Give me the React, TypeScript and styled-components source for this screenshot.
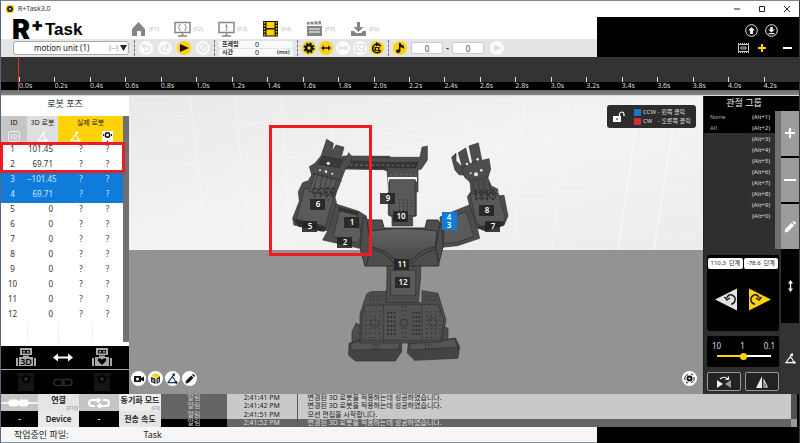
import React from "react";
import styled, { createGlobalStyle, css } from "styled-components";

const GOLD = "#ffd20a";
const BLUE = "#0f7bdb";

const GlobalStyle = createGlobalStyle`
  * { box-sizing: border-box; }
  body {
    margin: 0;
    background: #000;
    color: #222;
    font-family: "Noto Sans", "Noto Sans CJK KR", sans-serif;
    font-size: 8px;
    line-height: 10px;
  }
  button, input, select { font: inherit; color: inherit; margin: 0; padding: 0; border: 0; background: none; }
  button { display: flex; align-items: center; justify-content: center; cursor: pointer; }
  svg { display: block; flex: none; }
`;

const Window = styled.div`
  min-height: 100vh;
  display: flex;
  flex-direction: column;
  border: 1px solid #59677a;
  border-top-color: #7e8998;
  border-right-color: #2b3947;
  border-bottom: 0;
`;

const TitleBar = styled.header`
  height: 16px;
  display: flex;
  align-items: center;
  gap: 4px;
  padding: 0 7px 0 5px;
  background: #fff;
  h1 { flex: 1; margin: 0; font-size: 7px; line-height: 10px; font-weight: 400; color: #333; }
`;
const WindowButtons = styled.div`
  display: flex;
  gap: 15px;
`;

const Header = styled.div`
  display: flex;
`;
const HeaderMain = styled.div`
  flex: 1;
  min-width: 0;
  background: #fff;
`;
const HeaderSide = styled.div`
  width: 202px;
  display: flex;
  flex-direction: column;
  align-items: flex-end;
  gap: 6px;
  padding: 7px 6px 0 0;
  background: #000;
`;
const SideRow = styled.div<{ $gap: number; $end?: number }>`
  display: flex;
  align-items: center;
  gap: ${(p) => p.$gap}px;
  padding-right: ${(p) => p.$end ?? 0}px;
`;

const TabRow = styled.div`
  height: 22px;
  display: flex;
`;
const Logo = styled.div`
  width: 118px;
  height: 22px;
  padding: 2px 0 0 11px;
  margin-right: 11px;
  display: flex;
  align-items: flex-start;
  color: #000;
  font-family: "Liberation Sans", sans-serif;
  font-weight: 700;
  white-space: nowrap;
`;
const LogoR = styled.span`
  width: 19px;
  font-family: Inter, "Liberation Sans", sans-serif;
  font-weight: 900;
  font-size: 27px;
  line-height: 21px;
`;
const LogoPlus = styled.span`
  width: 14px;
  font-family: Inter, "Liberation Sans", sans-serif;
  font-weight: 900;
  font-size: 18px;
  line-height: 11px;
`;
const LogoTask = styled.span`
  font-size: 17px;
  line-height: 22px;
`;
const Tabs = styled.nav`
  display: grid;
  grid-template-columns: repeat(6, 44px);
  align-items: center;
  padding-top: 2px;
`;
const Tab = styled.button`
  justify-content: flex-start;
  gap: 2px;
  font-size: 6px;
  color: #bbb;
`;

const Toolbar = styled.div`
  height: 18px;
  display: flex;
  align-items: center;
  padding-left: 12px;
  background: #e4e4e4;
`;
const Divider = styled.i`
  width: 1px;
  height: 16px;
  margin: 0 4px;
  border-left: 1px dashed #777;
`;
const UnitPicker = styled.label`
  width: 116px;
  height: 14px;
  margin-right: 1px;
  display: flex;
  align-items: center;
  border: 1px solid #aaa;
  border-radius: 3px;
  background: #fff;
  color: #222;
  padding-right: 1px;
  select { flex: 1; min-width: 0; appearance: none; text-align: center; text-align-last: center; outline: 0; }
  small { font-size: 7px; color: #888; margin-right: 2px; }
`;
const Circles = styled.div<{ $gap: number }>`
  display: flex;
  gap: ${(p) => p.$gap}px;
`;
const Circle = styled.button<{ $on?: boolean }>`
  width: 14px;
  height: 14px;
  border-radius: 50%;
  background: ${(p) => (p.$on ? GOLD : "#fafafa")};
  color: ${(p) => (p.$on ? "#111" : "#dedede")};
`;
const Timing = styled.div`
  width: 74px;
  display: grid;
  gap: 1px;
`;
const TimingRow = styled.label`
  height: 7px;
  display: grid;
  grid-template-columns: 33px 1fr 16px;
  align-items: center;
  padding-left: 3px;
  border-radius: 2px;
  background: #fafafa;
  font-size: 6px;
  line-height: 7px;
  color: #222;
  input { width: 100%; height: 7px; font-size: 7px; }
  span { white-space: nowrap; font-weight: 600; }
`;
const Bounds = styled.div`
  display: flex;
  align-items: center;
  margin: 0 6px 0 4px;
`;
const NumberBox = styled.input`
  && {
    width: 32px;
    height: 12px;
    text-align: center;
    border: 1px solid #ccc;
    border-radius: 2px;
    background: #fff;
    color: #345;
  }
`;
const Dash = styled.span`
  width: 9px;
  text-align: center;
  font-weight: 700;
`;

const Timeline = styled.div`
  height: 39px;
  padding-left: 17px;
  background: linear-gradient(#333 25px, #000 25px 33px, #6c6c6c 33px, #858585 38px, #ddd 38px);
`;
const Ticks = styled.ol`
  list-style: none;
  height: 33px;
  margin: 0;
  padding: 0;
  display: grid;
  grid-template-columns: repeat(22, 1fr);
  border-left: 1px solid #d8361a;
`;
const Tick = styled.li`
  padding-top: 20px;
  font-size: 7px;
  line-height: 8px;
  color: #ddd;
  &::before { content: ""; display: block; width: 1px; height: 5px; background: #ddd; }
`;

const Main = styled.main`
  flex: 1;
  display: flex;
  min-height: 0;
`;

const PosePanel = styled.section`
  width: 128px;
  display: flex;
  flex-direction: column;
  background: #fff;
  h2 { margin: 0; height: 20px; font-size: 9px; line-height: 15px; font-weight: 400; text-align: center; color: #234; }
`;
const PoseBody = styled.div`
  position: relative;
  flex: 1;
  display: flex;
  align-items: stretch;
  margin-bottom: 4px;
`;
const ScrollStrip = styled.div`
  width: 6px;
  background: #707070;
`;
const PoseTable = styled.table`
  flex: 1;
  border-collapse: collapse;
  table-layout: fixed;
  width: 122px;
  td, th { padding: 0; font-weight: 400; }
`;
const HeadCell = styled.th<{ $tone: string }>`
  height: ${(p) => (p.scope === "col" ? 13 : 14)}px;
  background: ${(p) => p.$tone};
  font-size: 7px;
  line-height: 10px;
  color: #222;
  white-space: nowrap;
  svg { margin: 0 auto; }
`;
const PoseRow = styled.tr<{ $on: boolean }>`
  height: 15px;
  background: ${(p) => (p.$on ? BLUE : "#fff")};
  color: ${(p) => (p.$on ? "#d5eaff" : "#333")};
  line-height: 12px;
  td { text-align: center; vertical-align: top; }
  td:first-child { padding-right: 3px; }
  td:nth-child(2) { text-align: right; padding-right: 5px; }
  td:nth-child(3) { padding-left: 12px; }
`;
const FillRow = styled.tr`
  td { border-right: 1px solid #eee; }
  td:last-child { border: 0; }
`;
const Highlight = styled.div`
  position: absolute;
  left: -1px;
  right: 4px;
  top: 26px;
  height: 31px;
  border: 3px solid #ed1c24;
  pointer-events: none;
`;
const RobotBar = styled.div<{ $dim?: boolean }>`
  height: 23px;
  display: grid;
  grid-template-columns: 50px 1fr 54px;
  place-items: center;
  background: #000;
  color: ${(p) => (p.$dim ? "#2a2a2a" : "#a9a9a9")};
  ${(p) => p.$dim && css`border-top: 1px solid #aaa; height: 25px;`}
`;

const Viewport = styled.section`
  position: relative;
  flex: 1;
  min-width: 0;
  overflow: hidden;
  background: linear-gradient(#ededed 154px, #939393 154px);
`;
const Scene = styled.svg`
  width: 100%;
  height: 298px;
  text { font: 600 8px "Noto Sans", sans-serif; fill: #fff; text-anchor: middle; }
`;
const Legend = styled.div`
  position: absolute;
  top: 9px;
  right: 7px;
  width: 89px;
  height: 23px;
  display: flex;
  align-items: center;
  gap: 9px;
  padding-left: 6px;
  border-radius: 3px;
  background: #2d2d2d;
  color: #ddd;
  font-size: 6px;
  line-height: 9px;
`;
const LegendLine = styled.div<{ $c: string }>`
  display: grid;
  grid-template-columns: 8px 14px auto;
  gap: 1px;
  align-items: center;
  white-space: nowrap;
  &::before { content: ""; width: 7px; height: 7px; background: ${(p) => p.$c}; }
`;
const ViewTools = styled.div<{ $right?: boolean }>`
  position: absolute;
  bottom: 8px;
  ${(p) => (p.$right ? "right: 6px;" : "left: 2px;")}
  display: flex;
  gap: 2px;
`;
const ViewButton = styled.button`
  width: 15px;
  height: 15px;
  border-radius: 50%;
  background: #fff;
  color: #111;
`;

const SidePanel = styled.aside`
  width: 96px;
  display: flex;
  flex-direction: column;
  background: #000;
  border-left: 1px solid #222;
  h2 { margin: 0; height: 15px; padding-right: 15px; font-size: 9px; line-height: 14px; font-weight: 400; text-align: center; color: #eee; }
`;
const GroupArea = styled.div`
  height: 138px;
  display: grid;
  grid-template-columns: 1fr 6px 18px;
  background: #2f2f2f;
`;
const GroupList = styled.ul`
  list-style: none;
  margin: 0;
  padding: 0;
`;
const GroupItem = styled.button<{ $set: boolean }>`
  && { padding: 0 5px 0 6px; }
  width: 100%;
  height: 11px;
  justify-content: space-between;
  background: ${(p) => (p.$set ? "#000" : "transparent")};
  font-size: 6px;
  line-height: 10px;
  color: #aaa;
  span:last-child { color: #ddd; }
`;
const GroupActions = styled.div`
  display: grid;
  grid-template-rows: repeat(3, 1fr);
  gap: 2px;
  background: #000;
`;
const GroupAction = styled.button`
  && { background: #9c9c9c; color: #fff; }
`;
const Controls = styled.div`
  flex: 1;
  display: grid;
  grid-template-columns: 1fr 18px;
  background: #2f2f2f;
`;
const ControlStack = styled.div`
  display: flex;
  flex-direction: column;
  gap: 5px;
  padding: 6px 2px 3px 3px;
`;
const Card = styled.div`
  flex: 1;
  border-radius: 2px;
  background: #000;
  padding: 3px 1px;
`;
const Values = styled.div`
  display: grid;
  grid-template-columns: 1fr 1fr;
  gap: 1px;
`;
const Value = styled.output`
  height: 11px;
  border-radius: 2px;
  background: #fff;
  color: #222;
  font-size: 6px;
  line-height: 11px;
  text-align: center;
  white-space: nowrap;
`;
const Turns = styled.div`
  display: flex;
  justify-content: center;
  gap: 12px;
  padding-top: 19px;
`;
const SliderCard = styled.label`
  height: 31px;
  display: block;
  border-radius: 2px;
  background: #000;
  padding: 5px 4px 0 5px;
  color: #ddd;
`;
const Scale = styled.span`
  display: flex;
  justify-content: space-between;
`;
const Slider = styled.input`
  && {
    display: block;
    width: 54px;
    height: 8px;
    margin: 1px auto 0;
    appearance: none;
    background: linear-gradient(90deg, ${GOLD} 50%, #fff 50%) center / 100% 2px no-repeat;
  }
  &::-webkit-slider-thumb { appearance: none; width: 7px; height: 7px; border-radius: 50%; background: ${GOLD}; }
`;
const Mirrors = styled.div`
  display: grid;
  grid-template-columns: 1fr 1fr;
  gap: 4px;
`;
const MirrorButton = styled.button`
  && { border: 1px solid #999; background: #222; }
  height: 19px;
  border-radius: 2px;
`;
const ModeTabs = styled.div`
  display: grid;
  grid-template-rows: 74px 1fr;
`;
const ModeTab = styled.button<{ $dark?: boolean }>`
  && { background: ${(p) => (p.$dark ? "#000" : "#333")}; color: #fff; }
`;

const Footer = styled.footer`
  display: grid;
  grid-template-columns: 160px 1fr 6px 2px;
  height: 33px;
  background: #000;
`;
const Connection = styled.div`
  display: grid;
  grid-template-columns: 37px 41px 40px 42px;
  grid-template-rows: 17px 16px;
`;
const ConnCell = styled.button<{ $bg: string; $fg?: string; $key?: boolean }>`
  && {
    background: ${(p) => p.$bg};
    color: ${(p) => p.$fg ?? "#222"};
    font-weight: 600;
    ${(p) => p.$key && css`flex-direction: column; justify-content: flex-end;`}
  }
  white-space: nowrap;
  overflow: hidden;
  small { align-self: flex-end; padding-right: 1px; font-size: 5px; line-height: 6px; font-weight: 400; color: #888; }
`;
const Log = styled.table`
  width: 100%;
  height: 33px;
  border-collapse: collapse;
  table-layout: fixed;
  font-size: 7px;
  line-height: 8px;
  td { padding: 0; height: 8px; text-align: center; white-space: nowrap; }
  td:last-child { text-align: left; padding-left: 10px; }
`;
const LogRow = styled.tr<{ $on: boolean }>`
  background: ${(p) => (p.$on ? "#656565" : "#c9c9c9")};
  color: ${(p) => (p.$on ? "#ddd" : "#222")};
  td:first-child { background: ${(p) => (p.$on ? "#000" : "#646464")}; color: #ccc; }
  td:nth-child(2) { border-right: 1px solid #555; }
`;
const LogScroll = styled.div`
  background: linear-gradient(#505050 25px, #999 25px);
`;
const Status = styled.div`
  height: 16px;
  margin-right: 202px;
  display: flex;
  gap: 75px;
  padding-left: 13px;
  background: #f5f6f5;
  border-bottom: 1px solid #8a929c;
  font-size: 9px;
  line-height: 15px;
`;

type IconProps = { w: number; h: number; box: string; children: React.ReactNode };
const Icon = ({ w, h, box, children }: IconProps) => (
  <svg width={w} height={h} viewBox={box} fill="currentColor" aria-hidden="true">{children}</svg>
);
const line = (width: number) => ({ fill: "none", stroke: "currentColor", strokeWidth: width });

const tabs = [
  { key: "F1", icon: <Icon w={17} h={16} box="0 0 17 16"><path fill="#858585" d="M8.500 1 15 8v7H11v-5H7v5H2V8z" /></Icon> },
  { key: "F2", icon: <Icon w={17} h={16} box="0 0 17 16"><g stroke="#858585" fill="none" strokeWidth="1.500"><path d="M1 1.500h15v10H1zM8.500 12v3M4 15h9" /><path d="M6.500 3.500q-1.500 0-1.200 1.500 0 1-1 1.500 1 .5 1 1.500-.3 1.500 1.200 1.500M10.500 3.500q1.500 0 1.200 1.500 0 1 1 1.500-1 .5-1 1.500.3 1.500-1.200 1.500" strokeWidth="1" /></g></Icon> },
  { key: "F3", icon: <Icon w={17} h={16} box="0 0 17 16"><path stroke="#858585" fill="none" strokeWidth="1.500" d="M1 1.500h15v10H1zM8.500 12v3M4 15h9M8.500 3.500v4M8.500 8.500v1.500" /></Icon> },
  { key: "F4", icon: <Icon w={17} h={16} box="0 0 17 16"><path fill="#111" d="M1 0h15v15.500H1z" /><path fill={GOLD} d="M4.500 1h8v6h-8zM4.500 8.500h8v6h-8z" /><path stroke={GOLD} strokeWidth="1.500" strokeDasharray="1.500 1.500" d="M2.500 1v14M14.500 1v14" /></Icon> },
  { key: "F5", icon: <Icon w={17} h={16} box="0 0 17 16"><path fill="#858585" d="M1 5h15v10H1zM1 1l14-1v3.500H1z" /><path stroke="#fff" strokeWidth="1" d="m3 0 2 4M7 0l2 4M11 0l2 4M3 8h11M3 11h11" /></Icon> },
  { key: "F6", icon: <Icon w={17} h={16} box="0 0 17 16"><path fill="#858585" d="M7 1h3v5h3.500l-5 5-5-5H7zM1 10h3l2 2h5l2-2h3v5H1z" /></Icon> },
];

const FilmIcon = () => (
  <Icon w={11} h={10} box="0 0 11 10"><g {...line(1)} stroke="#ccc"><path d="M.5 1.500h10v7H.5zM3 4h5v2H3z" /><path strokeDasharray="1 1" d="M0 .5h11M0 9.500h11" /></g></Icon>
);
const Pencil = ({ size }: { size: number }) => (
  <Icon w={size} h={size} box="0 0 12 12"><path d="M.5 11.500 1.300 8 7.500 1.800l2.700 2.700L4 10.700zM8.300 1l1-.8q.5-.3 1 0l1.500 1.500q.3.500 0 1l-.8 1z" /></Icon>
);
const Angle = ({ size, color = "currentColor" }: { size: number; color?: string }) => (
  <Icon w={size} h={size} box="0 0 12 12"><g fill="none" stroke={color} strokeWidth="1.200"><path d="M8 1 1 10.500h10M6 4.500q3 2 3 6M9.500 9l1.800 1.500-1.800 1.300M5.800 2 8 1v2.500" /></g></Icon>
);
const Undo = ({ flip }: { flip?: boolean }) => (
  <Icon w={10} h={10} box="0 0 10 10"><g transform={flip ? "matrix(-1 0 0 1 10 0)" : undefined} {...line(1.300)}><path d="M4 1 1.500 3.300 4 5.500M1.500 3.300H6q2.500.2 2.500 2.500T6 8.300H3" /></g></Icon>
);
const Arrows = () => (
  <Icon w={10} h={6} box="0 0 10 6"><path d="M0 3 3 .5v1.700h4V.5L10 3 7 5.500V3.800H3v1.700z" /></Icon>
);

const RobotIcon = ({ kind }: { kind: "3d" | "heart" }) => (
  <Icon w={22} h={19} box="0 0 22 19">
    <path d="M5 0h12v7H5zM8 7.500h6V9H8zM4 9h14v9H4zM1 10h2v8H1zM19 10h2v8h-2z" />
    <path fill="#111" d="M7 2h8v3.500H7z" />
    <circle cx="9" cy="3.700" r="1" /><circle cx="13" cy="3.700" r="1" />
    {kind === "heart"
      ? <path fill="#000" d="m11 17-4-4q-1-2.500 1.500-2.800 1.500 0 2.500 1.600 1-1.600 2.500-1.600Q16 10.500 15 13z" />
      : <text x="11" y="17" fontSize="9" fontWeight="600" textAnchor="middle" fill="#000">3D</text>}
  </Icon>
);
const ControllerIcon = () => (
  <Icon w={18} h={20} box="0 0 18 20"><path d="M1 1h16v18H1z" opacity=".5" /><circle cx="9" cy="7" r="4" fill="#000" /><circle cx="9" cy="7" r="2" /><circle cx="3" cy="5" r="1" fill="#000" /><circle cx="15" cy="5" r="1" fill="#000" /></Icon>
);

const poses = [
  ["1", "101.45"], ["2", "69.71"], ["3", "−101.45"], ["4", "69.71"], ["5", "0"], ["6", "0"],
  ["7", "0"], ["8", "0"], ["9", "0"], ["10", "0"], ["11", "0"], ["12", "0"],
];
const logs = [
  ["2:41:41 PM", "변경된 3D 로봇을 적용하는데 성공하였습니다."],
  ["2:41:42 PM", "변경된 3D 로봇을 적용하는데 성공하였습니다."],
  ["2:41:51 PM", "모션 편집을 시작합니다."],
  ["2:41:52 PM", "변경된 3D 로봇을 적용하는데 성공하였습니다."],
];
const groups = ["None", "All", "", "", "", "", "", "", "", ""];
const tags: [string, number, number][] = [
  ["6", 318, 204], ["5", 310, 226], ["1", 352, 222], ["2", 345, 242], ["9", 388, 198], ["10", 401, 216],
  ["11", 402, 264], ["12", 403, 282], ["8", 487, 210], ["7", 493, 226],
];

const holes = (x: number, y: number, cols: number, rows: number, dx: number, dy: number, r = 2) =>
  Array.from({ length: cols * rows }, (_, i) => (
    <circle key={i} cx={x + (i % cols) * dx} cy={y + Math.floor(i / cols) * dy} r={r} fill="#2c2c2c" stroke="none" />
  ));

const Robot = () => (
  <Scene viewBox="129 96 574 298" preserveAspectRatio="xMidYMin slice" role="img" aria-label="3D robot">
    <defs>
      <linearGradient id="sky" x2="1" y2="1"><stop stopColor="#e9e9e9" /><stop offset=".5" stopColor="#f3f3f3" /><stop offset="1" stopColor="#ececec" /></linearGradient>
      <linearGradient id="plate" x2="0" y2="1"><stop stopColor="#646464" /><stop offset="1" stopColor="#484848" /></linearGradient>
    </defs>
    <path fill="url(#sky)" d="M129 97h574v153H129z" />
    <g stroke="#fff" fill="none" opacity=".6">
      <path d="m190 97 18 153M235 97l14 153M281 97l10 153M330 97l5 153M471 97l-5 153M525 97l-11 153M570 97l-18 153" strokeWidth=".7" />
      <path d="m636 128-18 122M673 125l-19 125" strokeWidth="1.500" />
      <path d="m129 112 574 48M129 167l574-34M129 203l574-15M129 232h574M420 97l283 60M400 97l-271 50" strokeWidth=".5" />
    </g>
    <g stroke="#303030" strokeWidth="2" strokeLinejoin="round" fill="#4d4d4d">
      <g transform="translate(260 120) scale(.3333)">
        <path d="m250 108 140 1v46l-20-6-120-2-20 40-30-30z" />
        <path fill="#373737" d="m250 122 130 4v20l-130-3z" />
        <path stroke="#686868" strokeWidth="5" strokeDasharray="7 8" d="m256 133 118 6" />
        <path d="m183 108 17-50 20 12-4 26 12-21 24 7-8 28 14 8 8-20 10 12-4 20-17 20-15 38-80-8-12-40 17-10z" />
        <path d="m160 160 84 20-15 38-4 15 5 18-20 80-28 2-80-18-4-20 20-52-3-28 13-27 17-6 12-20z" />
        <path fill="#5a5a5a" d="m133 205 90 18-26 96-88-21z" />
        <path fill="#393939" d="m175 132 64 12 11-24-60-12z" />
        <path fill="#5a5a5a" d="m164 162 66 18-18 48-64-14z" />
        <path d="m228 252 68 22 24 15-22 96-110-25 19-35z" />
        <path fill="#5c5c5c" d="m240 270 52 15 12 60-10 25-75-20z" />
        <path fill="#333" d="m235 262 60 15-3 9-55-14z" />
        <path fill="none" strokeWidth="2" d="m174 160-14 52m28-50-10 50m25-46-13 48m28-42-18 46" />
        {[165, 184, 204, 218].map((x) => <circle key={x} cx={x} cy={214} r="9" fill="none" strokeWidth="3" />)}
        {holes(164, 205, 4, 3, 18, 12, 3)}
        <g fill="#e8e8e8" stroke="none"><circle cx="205" cy="130" r="5" /><circle cx="180" cy="151" r="3" /><circle cx="198" cy="155" r="4" /><circle cx="217" cy="161" r="3" /></g>
        {holes(125, 240, 2, 2, 80, 55)}
        <path fill="#2e2e2e" d="m103 298 96 25-7 11-76-15z" />
      </g>
      <g transform="translate(370 120) scale(.3333)">
        <path d="M0 112h150l6-30 16-4v42l-18 27-10 3v65l-5 2v71l-11 2v28H66v-28l-11-5v-73l-4-64-6-5-45-4z" />
        <path fill="#333" d="m0 125 60 3 84-2-6 18-138-3z" />
        <path fill="none" stroke="#686868" strokeWidth="4" strokeDasharray="8 7" d="m5 135 125 2M60 164h78" />
        <path fill="#f5f5f5" stroke="none" d="M53 171h88v16l-5-8H62l-7 8v29l-3-4z" />
        <path fill="#595959" d="M58 179h77v108H58z" />
        {holes(88, 240, 4, 4, 12, 10)}
        <path d="m210 291 90-37 8 10 21 91-66 22-48 5z" />
        <path fill="#5a5a5a" d="m222 301 67-27 22 75-50 18-40 3z" />
        <path d="m258 100-13 12 10 38 12 14 22 2-4-24-14-6-13-14z" />
        <path d="m265 98 22-14 12 48-22 10zM297 78l28-9 10 50-27 10z" />
        <path d="m275 142 32-14 50-12 5 32-10 30-48 12-20-18z" />
        <path d="m300 184 52-14 12 28 20 10-2 20 20-2 12 62-12 28-58 16-22-8-22-63-8-31 11-16z" />
        <path fill="#585858" d="m300 222 85-2 20 70-4 22-62 12-20-17z" />
        <path fill="none" strokeWidth="2" d="m308 186 7 40m10-44 6 46m10-50 4 50m12-42 7 35" />
        {[325, 345, 368].map((x) => <circle key={x} cx={x} cy={226} r="10" fill="none" strokeWidth="3" />)}
        {holes(318, 212, 4, 3, 17, 13, 3)}
        <g fill="#e8e8e8" stroke="none"><circle cx="318" cy="163" r="6" /><circle cx="302" cy="160" r="3" /><circle cx="334" cy="151" r="4" /><circle cx="291" cy="132" r="4" /><circle cx="323" cy="118" r="4" /></g>
        <path fill="#2e2e2e" d="m322 322 80-18-2 12-56 14z" />
      </g>
      <path strokeWidth="1" d="m363 217 6 3h13l2 8h41l2-8h11l4 6 1 21-5 19h-73l-5-18z" />
      <path strokeWidth="1" fill="url(#plate)" d="M371 231q32-5 66 0l-2 16q-14 2-21 11-10 7-21 0-8-9-22-11z" />
      <path fill="none" strokeWidth="1" d="m367 221 4 26-5 19M440 223l-4 24 3 19M371 249q16 3 22 14h20q6-9 23-14" />
      <g transform="translate(330 240) scale(.3333)">
        <path d="m78 250 24 10-5 50H66V275zM330 255l24 10v40l-20 8z" />
        <path fill="#434343" d="m57 310 38-12h120v37l-19 28H76l-20-17zM235 308l105-8 36-6 13 26-5 35-130 6-22-22z" />
        <path fill="#545454" d="m60 312 37-12h115l-6 28-140 2zM240 310l98-8 36-6 10 26-146 8z" />
        <path d="M171 78h101v32l-7 78H168l3-75z" />
        <path fill="#5a5a5a" d="M182 91h75v75h-75z" />
        <path d="m123 155 45-1v34h108v-36l48 8 24 80-13 66-72 3H90V222l20-60z" />
        <path fill="#525252" d="m105 196 220-3 16 48-8 60H95v-66z" />
        <path fill="none" strokeWidth="2" d="M160 196v110M275 196v110" />
        {holes(107, 215, 4, 7, 14, 13)}
        {holes(174, 218, 3, 6, 10, 13, 3)}
        {holes(250, 218, 3, 6, 9, 13, 3)}
        {holes(291, 215, 4, 7, 13, 13)}
        <g fill="none"><circle cx="222" cy="250" r="12" /><circle cx="134" cy="250" r="12" /><circle cx="308" cy="246" r="12" /></g>
        {holes(130, 315, 3, 2, 8, 10)}
        {holes(287, 315, 3, 2, 9, 10)}
        {holes(218, 200, 2, 8, 9, 13)}
        {holes(122, 168, 4, 2, 10, 12)}
        {holes(286, 168, 4, 2, 10, 12)}
      </g>
    </g>
    {tags.map(([label, x, y]) => (
      <g key={label}>
        <path fill="#222" opacity=".88" d={`M${x - 8} ${y - 5}h15v11h-15z`} />
        <text x={x} y={y + 3}>{label}</text>
      </g>
    ))}
    <path fill={BLUE} d="M442 212h15v18h-15z" />
    <text x="449" y="220">4</text>
    <text x="449" y="228">3</text>
    <path fill="none" stroke="#ed1c24" strokeWidth="3" d="M270.500 126.500h100v128h-100z" />
  </Scene>
);

export default function App() {
  return (
    <>
      <GlobalStyle />
      <Window lang="ko">
        <TitleBar>
          <Icon w={8} h={8} box="0 0 8 8"><rect width="8" height="8" rx="2" fill={GOLD} /><circle cx="4" cy="4" r="3" fill="#222" /><circle cx="4" cy="4" r="1" fill="#eee" /></Icon>
          <h1>R+Task3.0</h1>
          <WindowButtons>
            <button aria-label="Minimize"><Icon w={10} h={8} box="0 0 10 8"><path d="M2 4h6" {...line(1)} /></Icon></button>
            <button aria-label="Maximize"><Icon w={10} h={8} box="0 0 10 8"><path d="M2.500 1.500h5v5h-5z" {...line(1)} /></Icon></button>
            <button aria-label="Close"><Icon w={10} h={8} box="0 0 10 8"><path d="m2 1 6 6M8 1 2 7" {...line(1)} /></Icon></button>
          </WindowButtons>
        </TitleBar>

        <Header>
          <HeaderMain>
            <TabRow>
              <Logo><LogoR>R</LogoR><LogoPlus>+</LogoPlus><LogoTask>Task</LogoTask></Logo>
              <Tabs>
                {tabs.map((t) => <Tab key={t.key}>{t.icon}<span>({t.key})</span></Tab>)}
              </Tabs>
            </TabRow>
            <Toolbar>
              <UnitPicker>
                <select aria-label="Motion unit"><option>motion unit (1)</option></select>
                <small>(--)</small>
                <Icon w={7} h={6} box="0 0 7 6"><path d="M0 0h7L3.500 6z" /></Icon>
              </UnitPicker>
              <Divider />
              <Circles $gap={5}>
                <Circle aria-label="Undo"><Undo /></Circle>
                <Circle aria-label="Redo"><Undo flip /></Circle>
                <Circle $on aria-label="Play"><Icon w={9} h={8} box="0 0 9 8"><path d="M0 0 9 4 0 8z" /></Icon></Circle>
                <Circle aria-label="Stop"><Icon w={10} h={10} box="0 0 10 10"><g {...line(1.200)}><circle cx="5" cy="5" r="4" /><path d="m2 8 6-6" /></g></Icon></Circle>
              </Circles>
              <Divider />
              <Timing>
                <TimingRow><span>프레임</span><input defaultValue="0" /></TimingRow>
                <TimingRow><span>시간</span><input defaultValue="0" /><span>(ms)</span></TimingRow>
              </Timing>
              <Divider />
              <Circles $gap={3}>
                <Circle $on aria-label="Settings"><Icon w={12} h={12} box="0 0 12 12"><circle cx="6" cy="6" r="3" {...line(2.500)} /><circle cx="6" cy="6" r="4.700" {...line(1.500)} strokeDasharray="2 1.700" /></Icon></Circle>
                <Circle $on aria-label="Range"><Arrows /></Circle>
                <Circle aria-label="Link"><Arrows /></Circle>
                <Circle aria-label="Image"><Icon w={10} h={8} box="0 0 10 8"><path d="M.5.5h9v7h-9zM1 7l3-4 2 2 1-1 2 3" {...line(1)} /></Icon></Circle>
                <Circle $on aria-label="Loop"><Icon w={12} h={12} box="0 0 12 12"><circle cx="6" cy="6.500" r="4.300" {...line(1.600)} strokeDasharray="22 5" strokeDashoffset="-2" /><path d="M3.500 5h5v4h-5z" /><circle cx="6" cy="7" r="1.200" fill={GOLD} /><path d="M5 0 9 2.200 5 4.500z" /></Icon></Circle>
              </Circles>
              <Divider />
              <Circle $on aria-label="Music"><Icon w={10} h={10} box="0 0 10 10"><path d="M4 0h1.500q.5 2 3.500 3v3q-1-1.500-3.500-1.800V8q-.5 2-2.500 2T1 8q.3-2 3-1.800z" /></Icon></Circle>
              <Bounds>
                <NumberBox aria-label="Start" defaultValue="0" />
                <Dash>-</Dash>
                <NumberBox aria-label="End" defaultValue="0" />
              </Bounds>
              <Circle aria-label="Play range"><Icon w={8} h={8} box="0 0 8 8"><path d="M1 .5 8 4 1 7.500z" /></Icon></Circle>
            </Toolbar>
          </HeaderMain>
          <HeaderSide>
            <SideRow $gap={7} $end={15}>
              <button aria-label="Upload"><Icon w={13} h={13} box="0 0 13 13"><g color="#eee"><circle cx="6.500" cy="6.500" r="5.800" {...line(1)} /><path fill="currentColor" d="m6.500 3 3.500 3.500H8V10H5V6.500H3z" /></g></Icon></button>
              <button aria-label="Download"><Icon w={13} h={13} box="0 0 13 13"><g color="#eee"><circle cx="6.500" cy="6.500" r="5.800" {...line(1)} /><path fill="currentColor" d="M5.200 3h2.600v2.500H10L6.500 8.500 3 5.500h2.200zM3.500 9h6v1.200h-6z" /></g></Icon></button>
            </SideRow>
            <SideRow $gap={8} $end={1}>
              <button aria-label="Frames"><FilmIcon /></button>
              <button aria-label="Add"><Icon w={10} h={10} box="0 0 10 10"><path fill={GOLD} d="M4 1h2v3h3v2H6v3H4V6H1V4h3z" /></Icon></button>
              <span />
              <button aria-label="Remove"><Icon w={9} h={10} box="0 0 9 10"><path fill="#fff" d="M0 4h9v2H0z" /></Icon></button>
            </SideRow>
          </HeaderSide>
        </Header>

        <Timeline>
          <Ticks>{Array.from({ length: 22 }, (_, i) => <Tick key={i}>{(i * 0.2).toFixed(1)}s</Tick>)}</Ticks>
        </Timeline>

        <Main>
          <PosePanel>
            <h2>로봇 포즈</h2>
            <PoseBody>
              <PoseTable>
                <colgroup><col width="26" /><col width="31" /><col width="34" /><col width="31" /></colgroup>
                <thead>
                  <tr><HeadCell $tone="#c6c6c6">ID</HeadCell><HeadCell $tone="#dfdfdf">3D 로봇</HeadCell><HeadCell $tone={GOLD} colSpan={2}>실제 로봇</HeadCell></tr>
                  <tr>
                    <HeadCell scope="col" $tone="#c6c6c6"><Icon w={12} h={11} box="0 0 12 11"><g {...line(1)} stroke="#eee"><rect x=".5" y=".5" width="11" height="10" rx="2" /><path d="M3.500 3v5M6 3.500h1.500q1.500.5 1.500 2T7.500 7.500H6z" /></g></Icon></HeadCell>
                    <HeadCell scope="col" $tone="#dfdfdf"><Angle size={11} color="#fff" /></HeadCell>
                    <HeadCell scope="col" $tone={GOLD}><Angle size={11} color="#fff" /></HeadCell>
                    <HeadCell scope="col" $tone={GOLD}><Icon w={11} h={12} box="0 0 11 12"><path fill="#fff" d="M0 0h11v12H0z" /><path d="M1 3h1v2H1zM9 3h1v2H9zM5 9.500h1V11H5z" /><circle cx="5.500" cy="4" r="2.200" fill="none" stroke="#111" strokeWidth="1.500" /></Icon></HeadCell>
                  </tr>
                </thead>
                <tbody>
                  {poses.map(([id, v]) => (
                    <PoseRow key={id} $on={id === "3" || id === "4"}><td>{id}</td><td>{v}</td><td>?</td><td>?</td></PoseRow>
                  ))}
                  <FillRow><td /><td /><td /><td /></FillRow>
                </tbody>
              </PoseTable>
              <ScrollStrip />
              <Highlight />
            </PoseBody>
            <RobotBar>
              <RobotIcon kind="3d" />
              <Icon w={20} h={9} box="0 0 20 9"><path fill="#fff" d="m0 4.500 5-4v3h10v-3l5 4-5 4v-3H5v3z" /></Icon>
              <RobotIcon kind="heart" />
            </RobotBar>
            <RobotBar $dim>
              <ControllerIcon />
              <Icon w={20} h={9} box="0 0 20 9"><g {...line(1.500)}><rect x="1" y="1.500" width="10" height="6" rx="3" /><rect x="9" y="1.500" width="10" height="6" rx="3" /></g></Icon>
              <ControllerIcon />
            </RobotBar>
          </PosePanel>

          <Viewport>
            <Robot />
            <Legend>
              <Icon w={12} h={12} box="0 0 12 12"><path fill="#fff" d="M0 5h8v6H0z" /><path d="M6.500 5V3q.3-2 2.200-2t2.300 2v2" fill="none" stroke="#fff" strokeWidth="1.200" /><path fill="#222" d="M3.500 7h1v2h-1z" /></Icon>
              <div>
                <LegendLine $c="#1b74c8"><span>CCW</span><span>- 왼쪽 클릭</span></LegendLine>
                <LegendLine $c="#cf3034"><span>CW</span><span>- 오른쪽 클릭</span></LegendLine>
              </div>
            </Legend>
            <ViewTools>
              <ViewButton aria-label="Camera"><Icon w={10} h={8} box="0 0 10 8"><path d="M0 1h7v2l3-1.500v5L7 5v2H0z" /><circle cx="3.500" cy="4" r="1.500" fill="#fff" /></Icon></ViewButton>
              <ViewButton aria-label="Cube view"><Icon w={11} h={11} box="0 0 11 11"><path fill={GOLD} d="m1 3 4-3 5 2-3 3z" /><path fill="#333" d="m1 4 4.500 1.500V11L1 9zM6.500 5.700 10 3v6l-3.500 2z" /><path d="M3 6v3M8.300 6v3" stroke="#ddd" /></Icon></ViewButton>
              <ViewButton aria-label="Angle"><Angle size={11} color="#1c2f5c" /></ViewButton>
              <ViewButton aria-label="Edit"><Pencil size={10} /></ViewButton>
            </ViewTools>
            <ViewTools $right>
              <ViewButton aria-label="Rotate view"><Icon w={11} h={11} box="0 0 11 11"><circle cx="5.500" cy="5.500" r="2" {...line(2)} /><path d="M1 7Q0 3 4 1.500M10 4q1 4-3 5.500M2 9q1 1 2 1M9 2Q8 1 7 1" {...line(1)} /></Icon></ViewButton>
            </ViewTools>
          </Viewport>

          <SidePanel>
            <h2>관절 그룹</h2>
            <GroupArea>
              <GroupList>
                {groups.map((g, i) => (
                  <li key={i}><GroupItem $set={i < 2}><span>{g}</span><span>(Alt+{(i + 1) % 10})</span></GroupItem></li>
                ))}
              </GroupList>
              <ScrollStrip />
              <GroupActions>
                <GroupAction aria-label="Add group"><Icon w={12} h={12} box="0 0 12 12"><path d="M5 1h2v4h4v2H7v4H5V7H1V5h4z" /></Icon></GroupAction>
                <GroupAction aria-label="Remove group"><Icon w={12} h={12} box="0 0 12 12"><path d="M0 5h12v2H0z" /></Icon></GroupAction>
                <GroupAction aria-label="Edit group"><Pencil size={12} /></GroupAction>
              </GroupActions>
            </GroupArea>
            <Controls>
              <ControlStack>
                <Card>
                  <Values><Value>110.3&nbsp; 단계</Value><Value>-78.6&nbsp; 단계</Value></Values>
                  <Turns>
                    <button aria-label="Turn left"><Icon w={22} h={23} box="0 0 22 23"><path fill="#e2e2e2" d="m0 11.500 22-11v22z" /><path d="M12 10q1-4 5-3 4 2 3 5.500-1 4-4 3.500M9.500 9l2.500 3 3-2" fill="none" stroke="#222" strokeWidth="1.500" /></Icon></button>
                    <button aria-label="Turn right"><Icon w={22} h={23} box="0 0 22 23"><path fill={GOLD} d="m22 11.500-22-11v22z" /><path d="M10 10Q9 6 5 7q-4 2-3 5.500 1 4 4 3.500M12.500 9 10 12 7 10" fill="none" stroke="#222" strokeWidth="1.500" /></Icon></button>
                  </Turns>
                </Card>
                <SliderCard>
                  <Scale><span>10</span><span>1</span><span>0.1</span></Scale>
                  <Slider type="range" min="0" max="2" defaultValue="1" aria-label="Step size" />
                </SliderCard>
                <Mirrors>
                  <MirrorButton aria-label="Swap"><Icon w={14} h={12} box="0 0 14 12"><path fill="#eee" d="m0 4 6 4-6 4z" /><path fill="#999" d="m14 4-6 4 6 4z" /><path d="M3 3q4-3.500 8 0M11.500.5V3.500h-3" fill="none" stroke="#eee" strokeWidth="1.200" /></Icon></MirrorButton>
                  <MirrorButton aria-label="Mirror"><Icon w={13} h={12} box="0 0 13 12"><path fill="#eee" d="M6 0v12H0zM7.500 2 12 11.500H7.500z" /><path fill="#555" d="m8.300 6 2.200 4.500H8.300z" /></Icon></MirrorButton>
                </Mirrors>
              </ControlStack>
              <ModeTabs>
                <ModeTab $dark aria-label="Move"><Icon w={5} h={12} box="0 0 5 12"><path d="M2.500 0 5 3.500H3.200v5H5L2.500 12 0 8.500h1.800v-5H0z" /></Icon></ModeTab>
                <ModeTab aria-label="Angle mode"><Angle size={11} /></ModeTab>
              </ModeTabs>
            </Controls>
          </SidePanel>
        </Main>

        <Footer>
          <Connection>
            <ConnCell $bg="#c5c5c5" $fg="#fff" aria-label="Cable"><Icon w={37} h={10} box="0 0 37 10"><path d="M0 4.300h7l2-2.800h7v1h3v-1h7l2 2.800h9v1.400h-9l-2 2.800h-7v-1h-3v1H9L7 5.700H0z" /></Icon></ConnCell>
            <ConnCell $bg="#e5e5e5" $key>연결<small>(F10)</small></ConnCell>
            <ConnCell $bg="#c5c5c5" $fg="#fff" aria-label="Sync"><Icon w={22} h={10} box="0 0 22 10"><path d="M10 2H4Q1 2 1 5t3 3h3M12 8h6q3 0 3-3t-3-3h-3M9 0l3 2-3 2.500M13 5.500 10 8l3 2" {...line(1.800)} /></Icon></ConnCell>
            <ConnCell $bg="#ededed" $key>동기화 모드<small>(F9)</small></ConnCell>
            <ConnCell $bg="#000" $fg="#fff">-</ConnCell>
            <ConnCell $bg="#e9e9e9">Device</ConnCell>
            <ConnCell $bg="#000" $fg="#fff">-</ConnCell>
            <ConnCell $bg="#e5e5e5">전송 속도</ConnCell>
          </Connection>
          <Log>
            <colgroup><col width="66" /><col width="70" /><col /></colgroup>
            <tbody>
              {logs.map(([time, msg], i) => <LogRow key={i} $on={i === 3}><td>알림</td><td>{time}</td><td>{msg}</td></LogRow>)}
            </tbody>
          </Log>
          <LogScroll />
        </Footer>
        <Status><span>작업중인 파일:</span><span>Task</span></Status>
      </Window>
    </>
  );
}
